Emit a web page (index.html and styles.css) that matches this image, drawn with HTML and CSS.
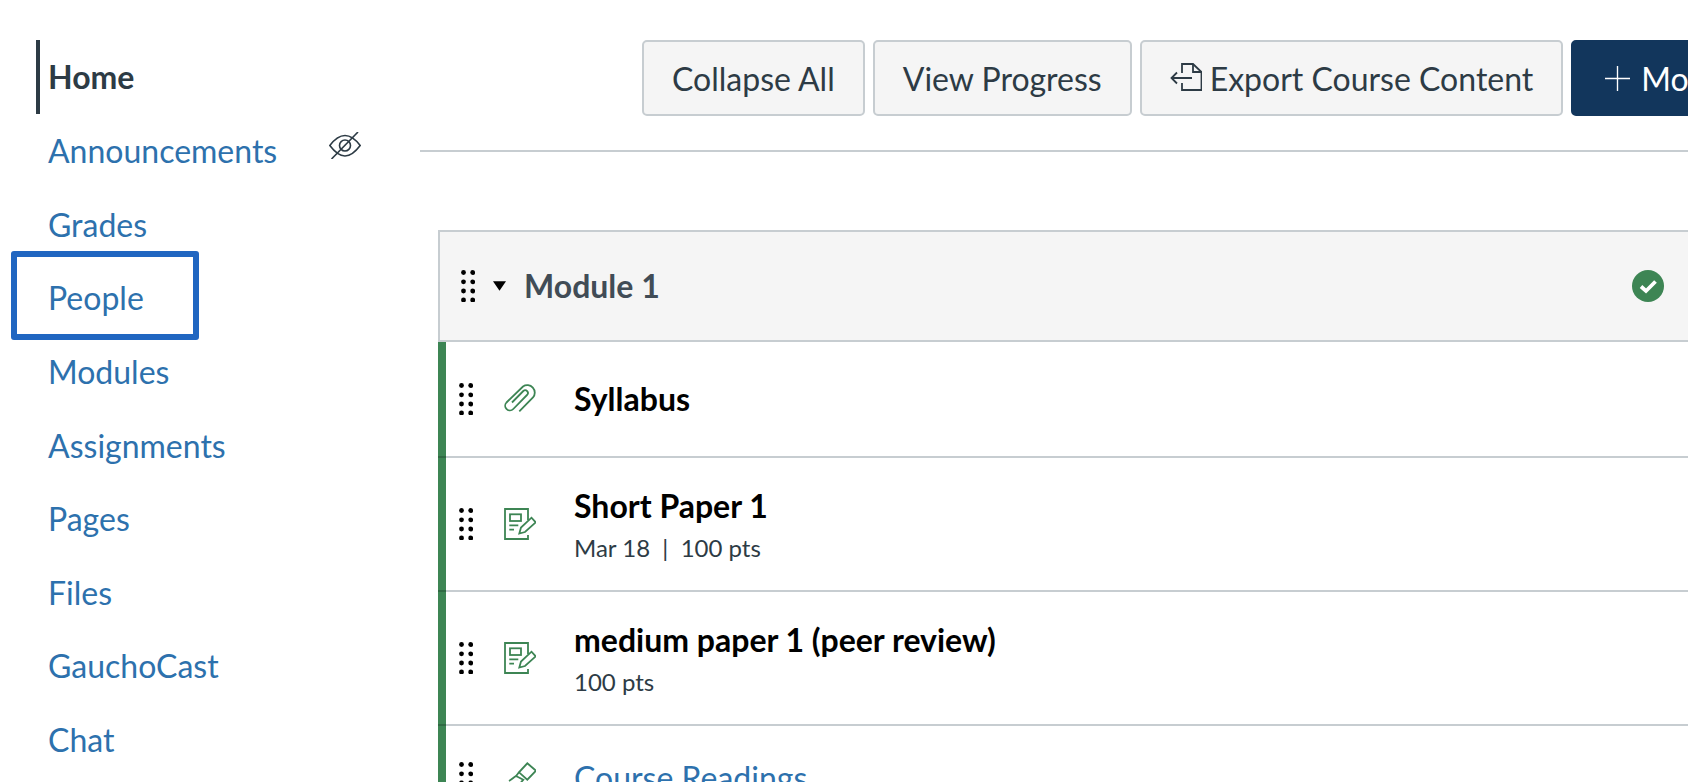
FILE: index.html
```html
<!DOCTYPE html>
<html lang="en">
<head>
<meta charset="utf-8">
<title>Modules</title>
<link rel="stylesheet" href="styles.css">
</head>
<body>
<div class="page">
  <nav class="sidebar">
    <a class="nav-item active">Home</a>
    <a class="nav-item">Announcements
      <svg class="eye" viewBox="0 0 32 27" fill="none" stroke="#2d3b45" stroke-width="1.6"><path d="M0.800 13.500 C5 8 10 3.500 16 3.500 S27 8 31.200 13.500 C27 19 22 24 16 24 S5 19 0.800 13.500Z"/><circle cx="16" cy="13.500" r="5.500"/><path d="M2.500 27 L29 0"/></svg>
    </a>
    <a class="nav-item">Grades</a>
    <a class="nav-item focused">People</a>
    <a class="nav-item">Modules</a>
    <a class="nav-item">Assignments</a>
    <a class="nav-item">Pages</a>
    <a class="nav-item">Files</a>
    <a class="nav-item">GauchoCast</a>
    <a class="nav-item">Chat</a>
  </nav>
  <main class="content">
    <div class="toolbar">
      <button class="btn">Collapse All</button>
      <button class="btn">View Progress</button>
      <button class="btn">
        <svg class="export" viewBox="0 0 32 32" fill="none" stroke="#2d3b45" stroke-width="1.800"><path d="M12 11 V2 H23 L31.500 10 V28 H12 V21"/><path d="M23 2 V10 H31.500"/><path d="M22 16 H1.500 M7 10.500 L1.500 16 L7 21.500"/></svg>
        Export Course Content
      </button>
      <button class="btn primary">
        <svg class="plus" viewBox="0 0 24 24" stroke="#fff" stroke-width="1.300"><path d="M12 0 V24 M0 12 H24"/></svg>
        Module
      </button>
    </div>
    <div class="module">
      <div class="module-head">
        <svg class="grip" viewBox="0 0 14 32"><use href="#dots"/></svg>
        <svg class="caret" viewBox="0 0 14 10"><path d="M0 0 H14 L7 10Z"/></svg>
        <span class="module-title">Module 1</span>
        <svg class="check" viewBox="0 0 32 32"><circle cx="16" cy="16" r="16" fill="#3d8554"/><path d="M9 16.500 L14 21 L23.500 11.500" fill="none" stroke="#fff" stroke-width="3.800"/></svg>
      </div>
      <div class="row row-one">
        <svg class="grip" viewBox="0 0 14 32"><use href="#dots"/></svg>
        <svg class="type" viewBox="0 0 32 32" fill="none" stroke="#3d8554" stroke-width="1.800"><path d="M15.300 28.300 L29 14.500 A7.500 7.500 0 0 0 19 3.500 L2.500 19.500 A4.500 4.500 0 0 0 9.300 26 L23 12 A2.600 2.600 0 0 0 19.300 8 L8 19.500"/></svg>
        <div class="info"><div class="title">Syllabus</div></div>
      </div>
      <div class="row row-two">
        <svg class="grip" viewBox="0 0 14 32"><use href="#dots"/></svg>
        <svg class="type" viewBox="0 0 32 32"><use href="#assignment"/></svg>
        <div class="info"><div class="title">Short Paper 1</div><div class="meta">Mar 18 &nbsp;|&nbsp; 100 pts</div></div>
      </div>
      <div class="row row-two">
        <svg class="grip" viewBox="0 0 14 32"><use href="#dots"/></svg>
        <svg class="type" viewBox="0 0 32 32"><use href="#assignment"/></svg>
        <div class="info"><div class="title">medium paper 1 (peer review)</div><div class="meta">100 pts</div></div>
      </div>
      <div class="row row-last">
        <svg class="grip" viewBox="0 0 14 32"><use href="#dots"/></svg>
        <svg class="type" viewBox="0 0 32 32" fill="none" stroke="#3d8554" stroke-width="1.800"><path d="M23.300 1.300 L32 8.700 L23.300 17.700 L15 10.300Z"/><path d="M15 10.300 L12 14 C9 16 7 18 5 19 M12 14 L19.300 17.700 L14 24 H7 L1 30"/></svg>
        <div class="info"><a class="title link">Course Readings</a></div>
      </div>
    </div>
  </main>
</div>
<svg class="defs" width="0" height="0">
  <defs>
    <g id="dots" fill="#000"><circle cx="2.500" cy="2.500" r="2.400"/><circle cx="11.700" cy="2.500" r="2.400"/><circle cx="2.500" cy="11.800" r="2.400"/><circle cx="11.700" cy="11.800" r="2.400"/><circle cx="2.500" cy="21" r="2.400"/><circle cx="11.700" cy="21" r="2.400"/><circle cx="2.500" cy="30" r="2.400"/><circle cx="11.700" cy="30" r="2.400"/></g>
    <g id="assignment" fill="none" stroke="#3d8554" stroke-width="1.800"><path d="M24 12 V1 H1 V31 H24 V27"/><rect x="6" y="6.300" width="11" height="6.700"/><path d="M5.300 17.300 H14.300 M5.300 21.700 H10"/><path d="M15.300 25.500 L17 19.500 L27.500 9.700 L31.700 14.300 L21 24Z"/></g>
  </defs>
</svg>
</body>
</html>
```
FILE: styles.css
```css
*, *::before, *::after { box-sizing: border-box; }
html, body { margin: 0; height: 100%; overflow: hidden; background: #fff; }
body { font-family: Lato, "Open Sans", sans-serif; color: #2d3b45; }
.page { display: flex; width: 1688px; height: 782px; overflow: hidden; }
.sidebar { width: 420px; flex: none; padding: 40px 0 0 36px; display: flex; flex-direction: column; }
.nav-item { position: relative; display: flex; align-items: center; height: 73.6px; padding-left: 12px; font-size: 32px; color: #2d71ad; }
.nav-item.active { height: 74px; border-left: 4px solid #2d3b45; padding: 0 0 2px 8px; color: #2d3b45; font-weight: 700; }
.focused::after { content: ""; position: absolute; left: -25px; top: -10px; width: 188px; height: 89px; border: 6px solid #2066c1; border-radius: 3px; }
.eye { position: absolute; left: 293px; top: 18px; width: 32px; height: 27px; }
.content { flex: none; width: 1268px; }
.toolbar { display: flex; gap: 8px; height: 152px; padding: 40px 0 0 222px; border-bottom: 2px solid #c7cdd1; white-space: nowrap; }
.btn { display: flex; align-items: center; justify-content: center; gap: 8px; flex: none; height: 76px; padding: 0 28px; font: 400 32px Lato, sans-serif; color: #2d3b45; background: #f5f5f5; border: 2px solid #c7cdd1; border-radius: 5px; }
.btn.primary { background: #12365c; border-color: #12365c; color: #fff; padding: 0 32px; gap: 11px; }
.export { width: 32px; height: 32px; }
.plus { width: 25px; height: 25px; }
.module { margin: 78px 0 0 18px; width: 1250px; border-top: 2px solid #c7cdd1; border-left: 2px solid #c7cdd1; }
.module-head { display: flex; align-items: center; height: 110px; background: #f5f5f5; padding: 0 24px 0 21px; border-bottom: 2px solid #c7cdd1; }
.module-head .grip { width: 14px; height: 32px; }
.caret { width: 13px; height: 10px; margin-left: 18px; }
.module-title { margin: 0 0 2px 18px; font-size: 32px; font-weight: 700; color: #414c56; }
.check { margin-left: auto; width: 32px; height: 32px; }
.row { position: relative; display: flex; align-items: center; margin-left: -2px; padding-left: 13px; border-left: 8px solid #3d8554; border-bottom: 2px solid #c7cdd1; }
.row::after { content: ""; position: absolute; left: -8px; bottom: -2px; width: 8px; height: 2px; background: #2f6a43; }
.row-one { height: 116px; }
.row-two { height: 134px; }
.row-two .info { padding-top: 3px; }
.row-last { height: 106px; }
.row .grip { width: 14px; height: 32px; flex: none; }
.type { width: 32px; height: 32px; flex: none; margin-left: 31px; }
.info { margin-left: 38px; }
.title { font-size: 32px; font-weight: 700; color: #000; line-height: 40px; }
.title.link { font-weight: 400; color: #2d71ad; }
.meta { font-size: 24px; line-height: 34px; color: #2d3b45; margin-top: 5px; }
.defs { position: absolute; }
```
